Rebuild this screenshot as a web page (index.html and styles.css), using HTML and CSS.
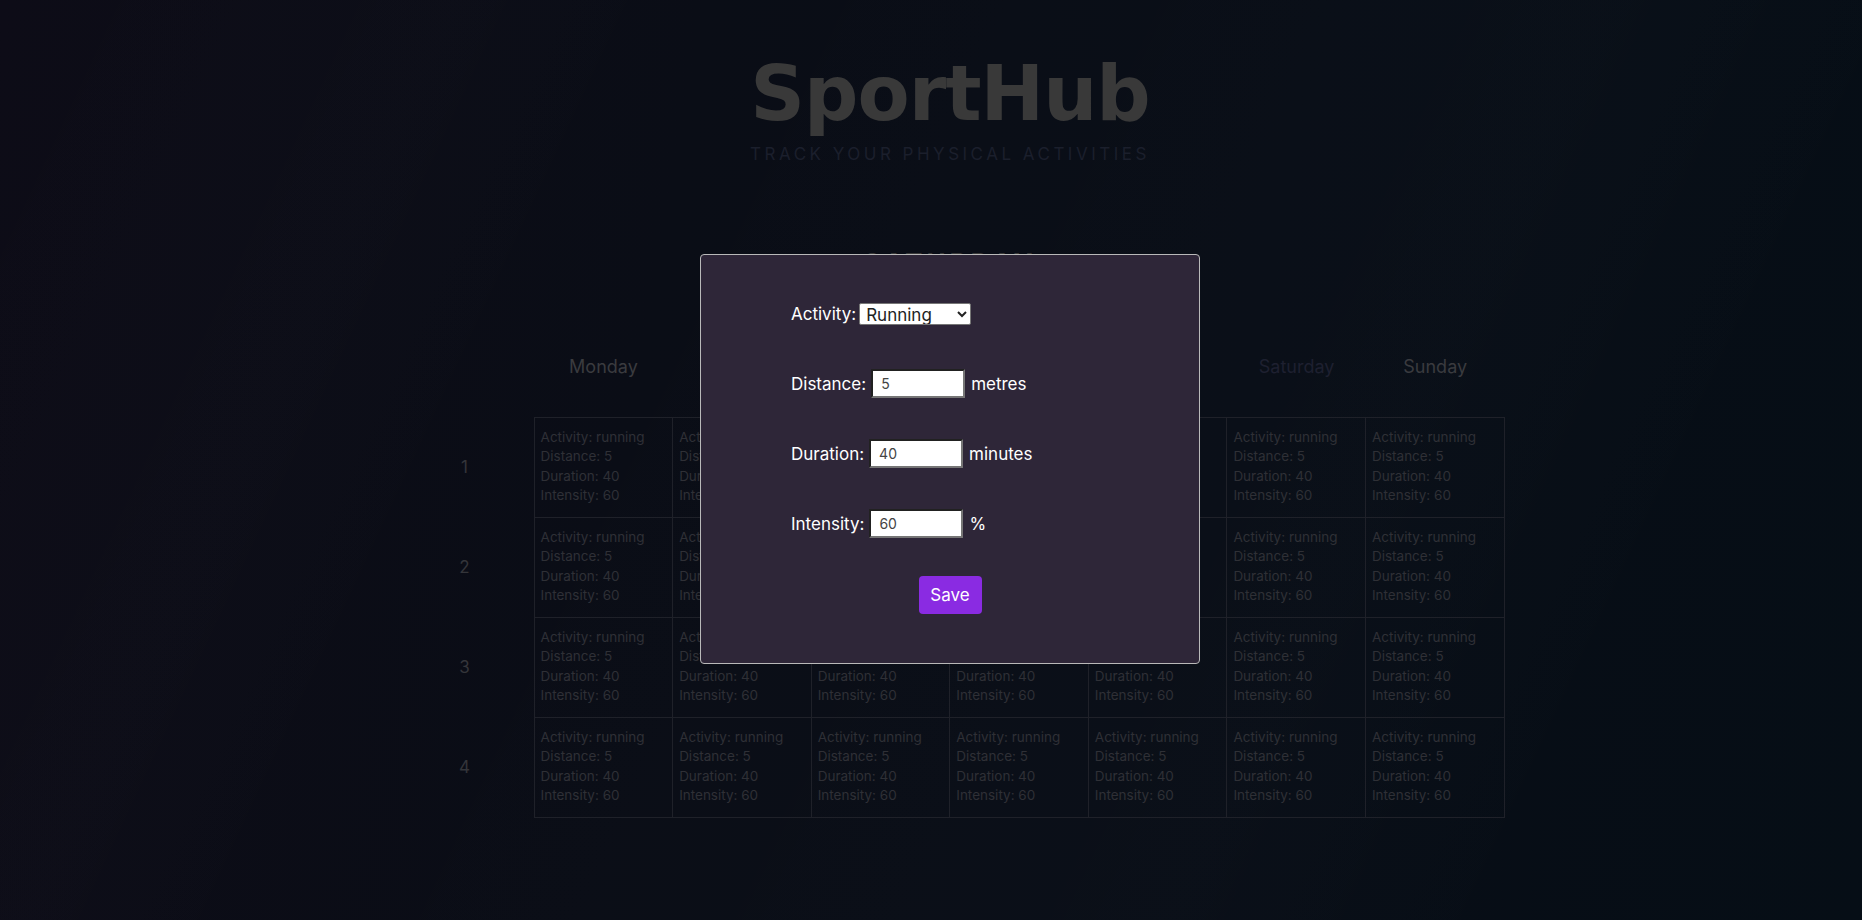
FILE: index.html
```html
<!DOCTYPE html>
<html lang="en">
<head>
<meta charset="utf-8">
<title>SportHub</title>
<link rel="stylesheet" href="styles.css">
</head>
<body>
<main class="page">
  <header class="hero">
    <h1 class="brand">SportHub</h1>
    <p class="tagline">Track your physical activities</p>
  </header>

  <h2 class="today">Saturday</h2>

  <section class="week">
    <div class="week-head">
      <span></span>
      <span class="day">Monday</span>
      <span class="day">Tuesday</span>
      <span class="day">Wednesday</span>
      <span class="day">Thursday</span>
      <span class="day">Friday</span>
      <span class="day current">Saturday</span>
      <span class="day">Sunday</span>
    </div>
    <table class="plan">
      <tbody id="plan-body"></tbody>
    </table>
  </section>
</main>

<div class="overlay">
  <form class="modal">
    <div class="field">
      <label for="activity">Activity:</label>
      <select id="activity" class="select">
        <option>Running</option>
        <option>Cycling</option>
        <option>Swimming</option>
      </select>
    </div>
    <div class="field">
      <label for="distance">Distance:</label>
      <input id="distance" class="num" type="text" value="5">
      <span>metres</span>
    </div>
    <div class="field">
      <label for="duration">Duration:</label>
      <input id="duration" class="num" type="text" value="40">
      <span>minutes</span>
    </div>
    <div class="field">
      <label for="intensity">Intensity:</label>
      <input id="intensity" class="num" type="text" value="60">
      <span>%</span>
    </div>
    <button type="button" class="save">Save</button>
  </form>
</div>

<script>
  var body = document.getElementById('plan-body');
  var html = '';
  for (var w = 1; w <= 4; w++) {
    html += '<tr><th class="week-no">' + w + '</th>';
    for (var d = 0; d < 7; d++) {
      html += '<td class="cell"><div>Activity: running</div><div>Distance: 5</div><div>Duration: 40</div><div>Intensity: 60</div></td>';
    }
    html += '</tr>';
  }
  body.innerHTML = html;
</script>
</body>
</html>
```

FILE: styles.css
```css
* { box-sizing: border-box; }

html, body {
  margin: 0;
  height: 100%;
}

body {
  background:
    linear-gradient(115deg, rgba(255,255,255,0) 0%, rgba(255,255,255,0.008) 20%, rgba(255,255,255,0) 30%, rgba(255,255,255,0.01) 70%, rgba(255,255,255,0) 85%),
    linear-gradient(100deg, #0d0c17 0%, #0a0d16 35%, #080d16 65%, #060e16 100%);
  font-family: "Inter", "DejaVu Sans", sans-serif;
  color: #3a3a3a;
  overflow: hidden;
}

.page {
  padding-left: 38px;
  padding-top: 56px;
}

.hero {
  text-align: center;
}

.brand {
  margin: 0;
  font-family: "DejaVu Sans", sans-serif;
  font-weight: 700;
  font-size: 76px;
  line-height: 76px;
  letter-spacing: -1px;
  color: #393939;
}

.tagline {
  margin: 12px 0 0;
  font-size: 17px;
  line-height: 20px;
  text-transform: uppercase;
  letter-spacing: 3.5px;
  color: #1b1f2c;
}

.today {
  margin: 84px 0 0;
  text-align: center;
  font-size: 26px;
  line-height: 30px;
  font-weight: 700;
  text-transform: uppercase;
  letter-spacing: 4px;
  color: #3a3a3a;
}

.week {
  width: 1109px;
  margin: 77px auto 0;
}

.week-head {
  display: grid;
  grid-template-columns: repeat(8, 1fr);
  font-size: 18px;
  line-height: 24px;
  text-align: center;
  margin-bottom: 38px;
}

.day { color: #3a3b3f; }
.day.current { color: #1e2030; }

.plan {
  width: 100%;
  table-layout: fixed;
  border-collapse: collapse;
}

.plan tr { height: 100px; }

.week-no {
  border: none;
  font-weight: 400;
  font-size: 17px;
  line-height: 20px;
  padding-bottom: 3px;
  color: #34353a;
}

.cell {
  border: 1px solid #1f2129;
  padding: 0 6px 2px;
  vertical-align: middle;
  font-size: 13.5px;
  line-height: 19.3px;
  color: #2f3036;
  white-space: nowrap;
}

.overlay {
  position: fixed;
  inset: 0;
  display: flex;
  align-items: center;
  justify-content: center;
  padding-left: 38px;
  padding-bottom: 3px;
}

.modal {
  width: 500px;
  padding: 44px 90px 49px;
  background: #2e2638;
  border: 1px solid #b9b9b9;
  border-radius: 4px;
  display: flex;
  flex-direction: column;
  gap: 40px;
  color: #ffffff;
  font-size: 17px;
}

.field {
  display: flex;
  align-items: center;
  gap: 5px;
  height: 30px;
}

.select {
  width: 112px;
  height: 22px;
  padding: 0 0 0 2px;
  font-family: "Inter", "DejaVu Sans", sans-serif;
  font-size: 17px;
  color: #222;
  background: #fff;
  border: 1px solid #767676;
  border-radius: 2px;
  margin-left: -2px;
}

.num {
  width: 94px;
  height: 29px;
  padding: 0 8px;
  font-family: "Inter", "DejaVu Sans", sans-serif;
  font-size: 14px;
  color: #444;
  background: #fff;
  border: 2px inset #767676;
}

.num + span { margin-left: 1px; }

.save {
  align-self: center;
  margin-top: -3px;
  width: 63px;
  height: 38px;
  border: none;
  border-radius: 4px;
  background: #8a2be2;
  color: #fff;
  font-family: "Inter", "DejaVu Sans", sans-serif;
  font-size: 17px;
}
```
